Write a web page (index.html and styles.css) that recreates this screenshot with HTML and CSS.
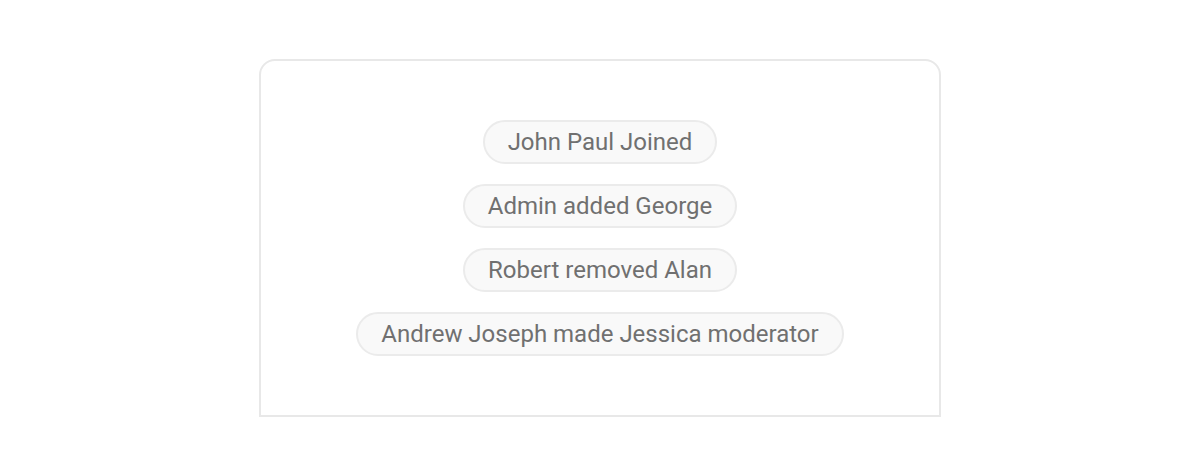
FILE: index.html
```html
<!DOCTYPE html>
<html>
<head>
<meta charset="utf-8">
<link rel="stylesheet" href="styles.css">
</head>
<body>
<div class="card">
  <div class="pill">John Paul Joined</div>
  <div class="pill">Admin added George</div>
  <div class="pill">Robert removed Alan</div>
  <div class="pill">Andrew Joseph made Jessica moderator</div>
</div>
</body>
</html>
```
FILE: styles.css
```css
html, body { margin: 0; background: #fff; }
body { padding-top: 59px; font-family: Roboto, "Liberation Sans", sans-serif; }
.card {
  box-sizing: border-box;
  width: 682px;
  height: 358px;
  margin: 0 auto;
  border: 2px solid #e8e8e8;
  border-radius: 16px 16px 0 0;
  padding-top: 59px;
  display: flex;
  flex-direction: column;
  align-items: center;
  gap: 20px;
}
.pill {
  box-sizing: border-box;
  height: 44px;
  padding: 0 23px;
  border: 2px solid #ebebeb;
  border-radius: 22px;
  background: #f9f9f9;
  color: #707070;
  font-size: 24px;
  line-height: 40px;
  white-space: nowrap;
}
```
